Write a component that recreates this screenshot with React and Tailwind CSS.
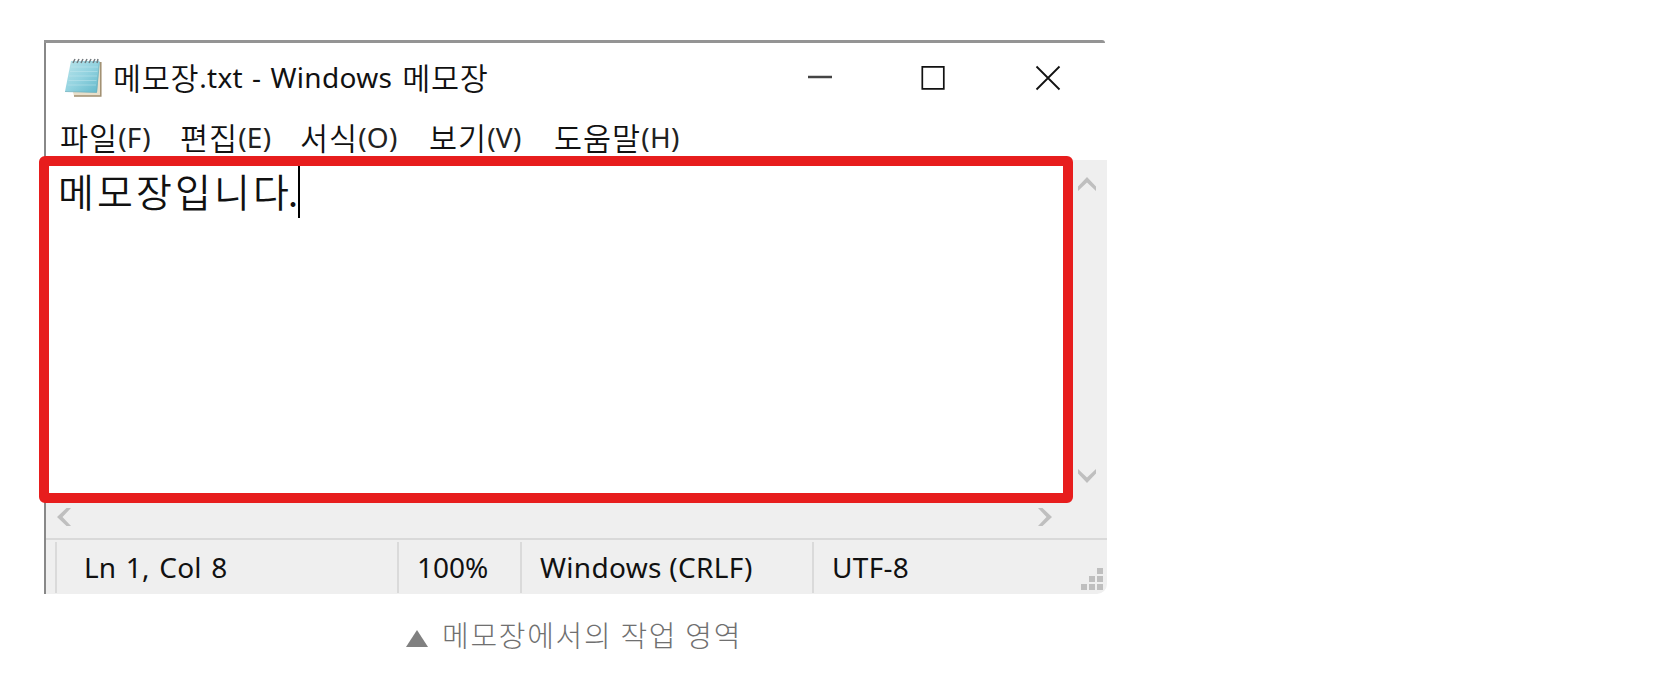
const ko = "font-['Noto_Sans_CJK_KR',sans-serif]";

function NotepadIcon() {
  return (
    <svg viewBox="0 0 40 42" className="mt-[14px] h-[42px] w-10 shrink-0">
      <defs>
        <linearGradient id="page" x1="0" y1="0" x2="1" y2="1">
          <stop offset="0" stopColor="#b9e4ea" />
          <stop offset="0.5" stopColor="#93d3e0" />
          <stop offset="1" stopColor="#62b8ca" />
        </linearGradient>
      </defs>
      <path d="M35 5h2v34H10l-1-4z" fill="#e9dfca" />
      <path d="M36.800 5v34H10" fill="none" stroke="#a08f70" strokeWidth="1.500" />
      <path d="M7 4h28.500L33 35.500 1 34.500z" fill="url(#page)" />
      <path d="M7 10h27M6 14.500h27.500M5 19h28M4.500 23.500h28M4 28h28" stroke="#c5e9ef" strokeWidth="0.800" opacity="0.6" />
      <path d="M1 34.500l31.500 1L35.500 5" fill="none" stroke="#6cadba" strokeWidth="0.700" />
      <path d="M9 6l2-4M13 6l2-4M17 6l2-4M21 6l2-4M25 6l2-4M29 6l2-4M33 6l1-4" stroke="#70797d" strokeWidth="1.500" />
    </svg>
  );
}

function Chevron({ className }) {
  return (
    <svg viewBox="0 0 18 14" className={"h-[14px] w-[18px] " + className}>
      <path d="M0 9.500L9 0l9 9.500V14L9 5.500 0 14z" fill="#bfbfbf" />
    </svg>
  );
}

function MenuItem({ name, hotkey, className }) {
  return (
    <span className={"flex " + className}>
      <span className={ko + " text-[30.500px] font-[350] tracking-[1px]"}>{name}</span>
      <span className="text-[28px] tracking-[0.300px] text-[#222]">({hotkey})</span>
    </span>
  );
}

function Grip() {
  return (
    <svg viewBox="0 0 22 22" className="h-[22px] w-[22px]">
      <path d="M16 0h6v6h-6zM8 8h6v6H8zM16 8h6v6h-6zM0 16h6v6H0zM8 16h6v6H8zM16 16h6v6h-6z" fill="#bfbfbf" />
    </svg>
  );
}

export default function App() {
  return (
    <main className="flex h-[679px] w-full flex-col overflow-hidden bg-white pt-10 pl-11 font-['Noto_Sans',sans-serif] whitespace-pre text-[#111]">
      <section className="flex h-[554px] w-[1063px] flex-col border-l-2 border-[#888]">
        <div className="-ml-0.5 h-[3px] w-[1061px] shrink-0 rounded-tr-[3px] bg-[#949494]" />
        <header className="flex h-[68px] shrink-0">
          <div className="flex w-[730px] pl-[18px]">
            <NotepadIcon />
            <h1 className="flex pl-[9px] leading-[69px]">
              <span className={ko + " text-[30.500px] font-[350] tracking-[0.700px]"}>메모장</span>
              <span className="text-[28px] tracking-[0.300px] [word-spacing:1.500px]">.txt - Windows </span>
              <span className={ko + " ml-[1px] text-[30.500px] font-[350] tracking-[0.700px]"}>메모장</span>
            </h1>
          </div>
          <svg viewBox="0 0 254 26" className="mt-[22px] ml-[31px] h-[26px] w-[254px]" fill="none" stroke="#111">
            <path d="M1 12h24" stroke="#444" strokeWidth="2.500" />
            <path d="M115.300 1.800h21.500v22h-21.500z" strokeWidth="1.700" />
            <path d="M229.500 1.500l23 23M252.500 1.500l-23 23" strokeWidth="1.800" />
          </svg>
        </header>

        <nav className="flex h-[49px] shrink-0 leading-[53px]">
          <MenuItem name="파일" hotkey="F" className="ml-[14px] w-[120px]" />
          <MenuItem name="편집" hotkey="E" className="w-[120px]" />
          <MenuItem name="서식" hotkey="O" className="w-[129px]" />
          <MenuItem name="보기" hotkey="V" className="w-[125px]" />
          <MenuItem name="도움말" hotkey="H" className="" />
        </nav>

        <div className="flex h-[340px] shrink-0 bg-[#efefef]">
          <div className="z-10 -mt-1 -ml-[7px] flex h-[347px] w-[1034px] shrink-0 rounded-[6px] border-10 border-[#e71d1d] bg-white">
            <p className={ko + " ml-[9px] h-[52px] w-[240px] text-[39px] leading-[49px] font-[350] tracking-[3.100px]"}>
              메모장입니<span className="tracking-[-1px]">다</span>.
            </p>
            <span className="h-[52px] w-[2px] bg-black" />
          </div>
          <div className="flex flex-1 flex-col items-center justify-between pt-[17px] pr-[7px] pb-[17px]">
            <Chevron className="" />
            <Chevron className="rotate-180" />
          </div>
        </div>

        <div className="flex h-[38px] shrink-0 items-start justify-between bg-[#efefef] pt-[10px] pr-[53px] pl-[9px]">
          <Chevron className="-rotate-90" />
          <Chevron className="rotate-90" />
        </div>

        <footer className="flex h-[56px] shrink-0 rounded-br-[10px] border-t-2 border-[#d9d9d9] bg-[#efefef] pt-[2px] text-[28px] leading-[51px]">
          <span className="ml-[9px] h-[51px] w-[342px] border-l-2 border-[#dadada] pl-[27px] tracking-[0.200px] [word-spacing:2px]">Ln 1, Col 8</span>
          <span className="h-[51px] w-[123px] border-l-2 border-[#dadada] pl-[18px]">100%</span>
          <span className="h-[51px] w-[292px] border-l-2 border-[#dadada] pl-[18px] tracking-[0.300px]">Windows (CRLF)</span>
          <span className="h-[51px] w-[269px] border-l-2 border-[#dadada] pl-[18px] tracking-[0.300px]">UTF-8</span>
          <div className="pt-[26px]">
            <Grip />
          </div>
        </footer>
      </section>

      <p className={ko + " flex pl-[362px] text-[29px] leading-[80px] font-light text-[#707070]"}>
        <svg viewBox="0 0 22 17" className="mt-[36px] mr-[14px] h-[17px] w-[22px]">
          <path d="M11 0l11 17H0z" fill="#808080" />
        </svg>
        <span className="tracking-[1.700px]">메모장에서의 작업 영역</span>
      </p>
    </main>
  );
}
